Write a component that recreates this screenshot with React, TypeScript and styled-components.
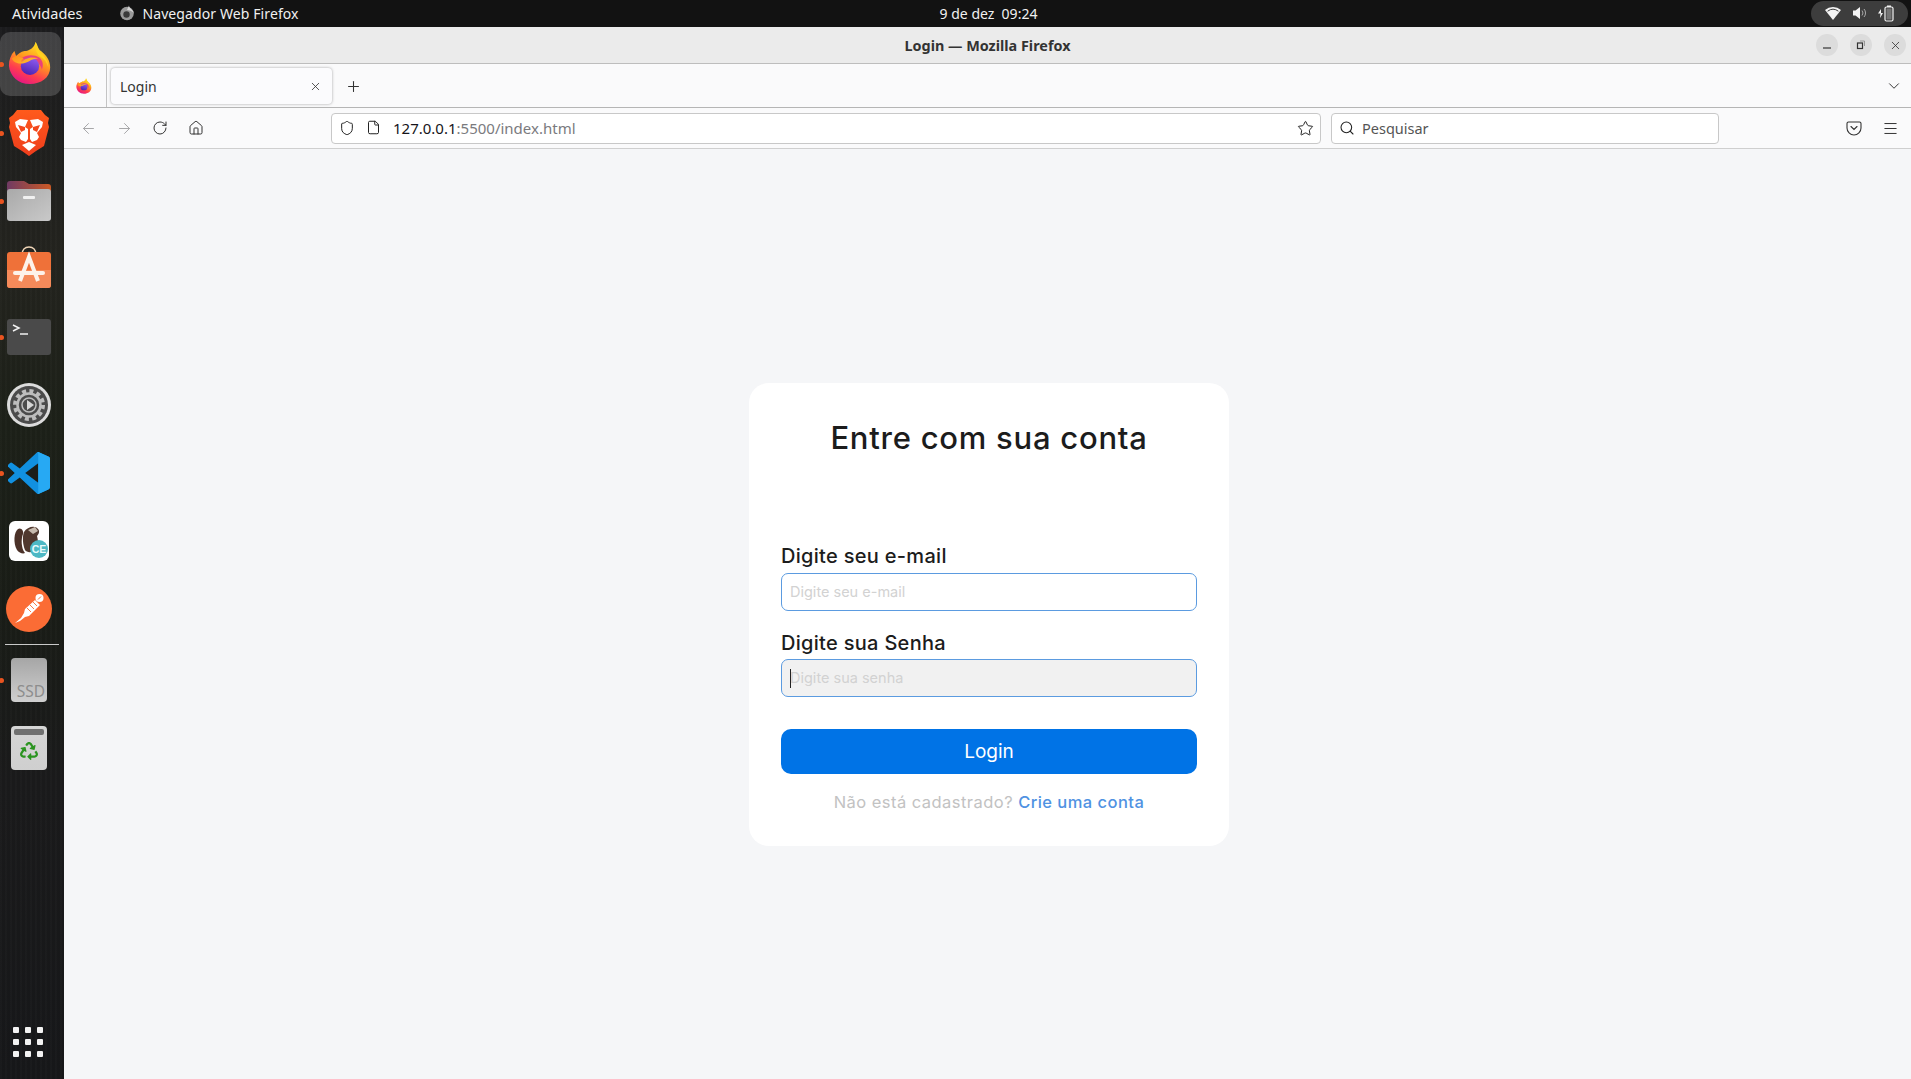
import React from "react"
import styled, { createGlobalStyle } from "styled-components"
import { ArrowLeft, ArrowRight, ChevronDown, File, House, Menu, Plus, RotateCw, Search, Shield, Star, X } from "lucide-react"
import { FaRecycle } from "react-icons/fa"

const Global = createGlobalStyle`
  html, body { margin: 0; padding: 0; height: 100%; overflow: hidden; }
  body { font-family: "Noto Sans", sans-serif; background: #f5f6f8; }
  #root { height: 100%; }
  * { box-sizing: border-box; }
`

const Screen = styled.div`
  width: 1911px;
  height: 1079px;
  display: flex;
  flex-direction: column;
`

const TopBar = styled.header`
  height: 27px;
  flex: none;
  background: #121212;
  color: #f0f0f0;
  font-size: 14px;
  display: grid;
  grid-template-columns: 1fr auto 1fr;
  align-items: center;
  padding: 0 3px 1px 64px;
`

const TopLeft = styled.div`
  display: flex;
  align-items: center;
  gap: 37px;
  margin-left: -52px;
  font-size: 14.5px;
`

const AppMenu = styled.div`
  display: flex;
  align-items: center;
  gap: 7px;
  font-size: 14px;
  letter-spacing: 0.1px;
`

const Clock = styled.div`
  margin-left: 5px;
  font-size: 14px;
  white-space: pre;
`

const Tray = styled.div`
  justify-self: end;
  width: 97px;
  height: 25px;
  border-radius: 13px;
  background: #3d3d3d;
  display: flex;
  align-items: center;
  justify-content: space-evenly;
  padding: 0 4px;
`

const Desk = styled.div`
  flex: 1;
  display: flex;
  min-height: 0;
`

const Dock = styled.nav`
  width: 64px;
  flex: none;
  display: flex;
  flex-direction: column;
  padding-top: 3px;
  background:
    repeating-linear-gradient(90deg, rgba(255, 255, 255, 0.01) 0 2px, rgba(0, 0, 0, 0.04) 2px 5px),
    linear-gradient(180deg, #1c1c1e 0%, #24241f 22%, #1d2119 38%, #1a1d17 55%, #1b1b1c 72%, #17181a 100%);
`

const DockItem = styled.div<{ $active?: boolean; $lift?: number }>`
  position: relative;
  height: ${p => (p.$active ? "64px" : "68px")};
  margin: ${p => (p.$active ? "2px 3px 3px 0" : "0")};
  padding-right: ${p => (p.$active ? "2px" : "7px")};
  padding-bottom: ${p => p.$lift ?? 0}px;
  display: flex;
  align-items: center;
  justify-content: center;
  background: ${p => (p.$active ? "rgba(255, 255, 255, 0.17)" : "transparent")};
  border-radius: ${p => (p.$active ? "10px" : "0")};
`

const RunDot = styled.span`
  position: absolute;
  left: -1px;
  top: 50%;
  width: 5px;
  height: 5px;
  margin-top: -2px;
  border-radius: 50%;
  background: #e95420;
`

const DockRule = styled.div`
  height: 1px;
  margin: 1px 5px 1px;
  background: #c9c9c9;
`

const AppsGrid = styled.div`
  margin: auto 0 22px 13px;
  display: grid;
  grid-template-columns: repeat(3, 6px);
  gap: 6px;
`

const AppsDot = styled.span`
  width: 6px;
  height: 6px;
  border-radius: 1px;
  background: #f2f2f2;
`

const TrashCan = styled.div`
  width: 36px;
  height: 44px;
  border-radius: 4px;
  background: linear-gradient(180deg, #d5d5d5, #cfcfcf);
  display: flex;
  flex-direction: column;
  align-items: center;
  padding-top: 3px;
  color: #2b9420;
  font-size: 18px;
`

const TrashLid = styled.div`
  width: 30px;
  height: 6px;
  border-radius: 2px;
  background: #707070;
  margin-bottom: 7px;
`

const Browser = styled.main`
  flex: 1;
  min-width: 0;
  display: flex;
  flex-direction: column;
`

const TitleBar = styled.div`
  height: 37px;
  flex: none;
  background: #ebebeb;
  border-bottom: 1px solid #bdbdbd;
  position: relative;
  display: flex;
  align-items: center;
  justify-content: center;
  font-size: 14.4px;
  font-weight: 700;
  color: #333;
  padding-top: 1px;
`

const WindowButtons = styled.div`
  position: absolute;
  right: 5px;
  top: 7px;
  display: flex;
  gap: 12px;
`

const WindowButton = styled.span`
  width: 22px;
  height: 22px;
  border-radius: 50%;
  background: #dcdcdc;
  color: #333;
  display: flex;
  align-items: center;
  justify-content: center;
`

const TabBar = styled.div`
  height: 44px;
  flex: none;
  background: #fafafb;
  border-bottom: 1px solid #b5b5b5;
  display: flex;
  align-items: center;
  padding-right: 8px;
  color: #333;
`

const PinnedTab = styled.div`
  width: 43px;
  align-self: stretch;
  border-right: 1px solid #c4c4c4;
  display: flex;
  align-items: center;
  justify-content: center;
  padding-right: 3px;
`

const Tab = styled.div`
  width: 221px;
  height: 36px;
  margin: 1px 0 0 4px;
  border-radius: 4px;
  background: #fbfbfd;
  box-shadow: 0 0 3px rgba(0, 0, 0, 0.35);
  display: flex;
  align-items: center;
  justify-content: space-between;
  padding: 0 10px 0 9px;
  font-size: 14px;
  color: #333;
`

const NewTab = styled.span`
  margin: 1px 0 0 13px;
  display: flex;
`

const TabEnd = styled.span`
  margin: 1px 0 0 auto;
  display: flex;
`

const NavBar = styled.div`
  height: 41px;
  flex: none;
  background: #fafafb;
  border-bottom: 1px solid #cfcfcf;
  display: flex;
  align-items: center;
  padding-left: 6px;
  color: #333;
`

const NavButton = styled.span<{ $off?: boolean }>`
  width: 36px;
  display: flex;
  justify-content: center;
  color: ${p => (p.$off ? "#a6a6a8" : "#333")};
`

const UrlBox = styled.div`
  width: 990px;
  height: 31px;
  margin-left: 117px;
  border: 1px solid #c8c8c8;
  border-radius: 4px;
  background: #fff;
  display: flex;
  align-items: center;
  padding: 0 6px 0 7px;
  font-size: 15px;
  color: #222;
`

const UrlIcons = styled.span`
  display: flex;
  gap: 11px;
  margin-right: 12px;
`

const UrlHost = styled.span`
  color: #15141a;
`

const UrlRest = styled.span`
  color: #7a7a7e;
`

const UrlEnd = styled.span`
  margin-left: auto;
  display: flex;
`

const SearchBox = styled(UrlBox)`
  width: 388px;
  margin-left: 10px;
  color: #555;
  gap: 7px;
  font-size: 14.5px;
`

const ToolIcons = styled.div`
  margin-left: auto;
  margin-right: 12px;
  display: flex;
  gap: 20px;
  align-items: center;
`

const Page = styled.section`
  flex: 1;
  min-height: 0;
  background: #f5f6f8;
  display: flex;
  align-items: center;
  justify-content: center;
  padding-left: 3px;
`

const Card = styled.form`
  width: 480px;
  height: 463px;
  background: #fff;
  border-radius: 20px;
  padding: 32px;
  font-family: Inter, "Noto Sans", sans-serif;
`

const Title = styled.h1`
  margin: 5px 0 88px;
  font-size: 31px;
  line-height: 36px;
  letter-spacing: 0.75px;
  font-weight: 500;
  text-align: center;
  color: #1c1c1c;
`

const Label = styled.label<{ $gap: number }>`
  display: block;
  font-size: 20px;
  line-height: 24px;
  letter-spacing: 0.3px;
  font-weight: 500;
  color: #1c1c1c;
  margin-bottom: ${p => p.$gap}px;
`

const Field = styled.div`
  margin-bottom: 20px;
`

const InputWrap = styled.div`
  position: relative;
`

const Input = styled.input<{ $focused?: boolean }>`
  display: block;
  width: 100%;
  height: 38px;
  padding: 0 8px;
  border: 1px solid #5b9be0;
  border-radius: 7px;
  background: ${p => (p.$focused ? "#f1f1f1" : "#fff")};
  font: 14.5px Inter, "Noto Sans", sans-serif;
  outline: none;
  caret-color: transparent;
  &::placeholder { color: #d2d2d2; opacity: 1; }
`

const Caret = styled.span`
  position: absolute;
  left: 9px;
  top: 10px;
  width: 1px;
  height: 19px;
  background: #222;
`

const LoginButton = styled.button`
  display: block;
  width: 100%;
  height: 45px;
  margin-top: 32px;
  border: 0;
  border-radius: 10px;
  background: #0073e6;
  color: #fff;
  font: 400 19px Inter, "Noto Sans", sans-serif;
`

const Footer = styled.p`
  margin: 18px 0 0;
  text-align: center;
  font-size: 16.5px;
  line-height: 20px;
  letter-spacing: 0.46px;
  color: #c2c2c2;
`

const FooterLink = styled.a`
  color: #4f92e2;
  font-weight: 500;
`

const FirefoxIcon = ({ size, id }: { size: number; id: string }) => (
  <svg width={size} height={size} viewBox="0 0 48 48">
    <defs>
      <linearGradient id={`${id}a`} x1="0.75" y1="0.05" x2="0.3" y2="1">
        <stop offset="0" stopColor="#ffe226" />
        <stop offset="0.4" stopColor="#ff9a1f" />
        <stop offset="0.72" stopColor="#ff3d4e" />
        <stop offset="1" stopColor="#e31587" />
      </linearGradient>
      <linearGradient id={`${id}b`} x1="0.7" y1="0" x2="0.3" y2="1">
        <stop offset="0" stopColor="#8f5cf0" />
        <stop offset="1" stopColor="#4a22b0" />
      </linearGradient>
      <linearGradient id={`${id}c`} x1="0" y1="0" x2="1" y2="0.6">
        <stop offset="0" stopColor="#ff8a16" />
        <stop offset="1" stopColor="#ffbd2e" />
      </linearGradient>
    </defs>
    <path d="M30 1c3 4 2 7 6 10 6 5 10 10 10 18 0 11-10 18-22 18C11 47 2 38 1 27c0-6 2-12 6-16l2 6c2-3 5-5 9-6-1 0 10 0 12-10z" fill={`url(#${id}a)`} />
    <path d="M14 20c4-5 14-6 20-2 4 3 5 8 3 13-1-3-4-9-10-11-5-1-9-1-13 0z" fill="#e8318a" opacity="0.85" />
    <ellipse cx="24" cy="27.500" rx="10" ry="9.500" fill={`url(#${id}b)`} />
    <path d="M4 19c3-2 7-4 7-4 0 2 3 3 6 4-2 1-3 2-2 4 2-3 9-7 18-4-4 0-7 1-10 3-5 3-10 3-13 2-3-1-5-3-6-5z" fill={`url(#${id}c)`} />
    <path d="M30 1c2 5 3 9 8 14 4 4 6 9 6 14-1-5-4-9-9-12-4-3-6-10-5-16z" fill="#ffd21f" />
  </svg>
)

const BraveIcon = () => (
  <svg width="42" height="48" viewBox="0 0 42 48">
    <defs>
      <linearGradient id="braveFace" x1="0" y1="0" x2="0" y2="1">
        <stop offset="0" stopColor="#ff5a1c" />
        <stop offset="1" stopColor="#ee3d1c" />
      </linearGradient>
    </defs>
    <path d="M9 1h24l4 5 4 3-1 5 1 4-5 19-8 5-7 5-7-5-8-5L1 18l1-4-1-5 4-3z" fill="url(#braveFace)" />
    <path d="M20 11l-8-1-5 3 1 5 5 6-2 4 2 3 5 2 2-3V20l-3-2z" fill="#fff" />
    <path d="M22 11l8-1 5 3-1 5-5 6 2 4-2 3-5 2-2-3V20l3-2z" fill="#fff" />
    <path d="M10 16l7 2 0 3-4 2zM32 16l-7 2 0 3 4 2z" fill="#f4481c" />
    <path d="M14 36l7-3 7 3-7 6z" fill="#fff" />
  </svg>
)

const FilesIcon = () => (
  <svg width="44" height="40" viewBox="0 0 44 40">
    <defs>
      <linearGradient id="filesBack" x1="0" y1="0" x2="1" y2="0">
        <stop offset="0" stopColor="#6f3a63" />
        <stop offset="1" stopColor="#cc5a25" />
      </linearGradient>
      <linearGradient id="filesFront" x1="0" y1="0" x2="1" y2="1">
        <stop offset="0" stopColor="#a9a9a9" />
        <stop offset="1" stopColor="#c9c9c9" />
      </linearGradient>
    </defs>
    <path d="M3 0h14l5 3h19a3 3 0 0 1 3 3v12H0V3a3 3 0 0 1 3-3z" fill="url(#filesBack)" />
    <rect y="8" width="44" height="32" rx="3" fill="url(#filesFront)" />
    <rect x="16" y="15" width="12" height="3" rx="1" fill="#f1f1f1" />
  </svg>
)

const StoreIcon = () => (
  <svg width="44" height="43" viewBox="0 0 44 43">
    <path d="M15 10c0-5 3-8 7-8s7 3 7 8" fill="none" stroke="#f0d6b8" strokeWidth="1.600" />
    <rect y="7" width="44" height="36" rx="3" fill="#ef7139" />
    <path d="M0 25h44v15a3 3 0 0 1-3 3H3a3 3 0 0 1-3-3z" fill="#f58a5a" />
    <path d="M13 36l9-24 9 24" fill="none" stroke="#fdf2ea" strokeWidth="4" />
    <path d="M8 28h28" stroke="#fdf2ea" strokeWidth="4" strokeLinecap="round" />
  </svg>
)

const TerminalIcon = () => (
  <svg width="44" height="36" viewBox="0 0 44 36">
    <rect width="44" height="36" rx="3" fill="#4a4a4a" />
    <path d="M6 6l6 3-6 3" fill="none" stroke="#f2f2f2" strokeWidth="1.500" />
    <path d="M13 15h8" stroke="#f2f2f2" strokeWidth="1.500" />
  </svg>
)

const SettingsIcon = () => (
  <svg width="46" height="46" viewBox="0 0 46 46">
    <circle cx="23" cy="23" r="22" fill="#dcdcdc" />
    <circle cx="23" cy="23" r="19" fill="#4b4b4b" />
    <circle cx="23" cy="23" r="14" fill="none" stroke="#bdbdbd" strokeWidth="4" strokeDasharray="4 3.330" />
    <circle cx="23" cy="23" r="11.500" fill="none" stroke="#bdbdbd" strokeWidth="2.500" />
    <circle cx="23" cy="23" r="7" fill="none" stroke="#bdbdbd" strokeWidth="1.500" />
    <path d="M21 18l7 5-7 5z" fill="#d6d6d6" />
  </svg>
)

const VsCodeIcon = () => (
  <svg width="42" height="42" viewBox="0 0 100 100">
    <path d="M96 11L75 1a6 6 0 0 0-7 1L28 39 10 26a4 4 0 0 0-5 0L1 30a4 4 0 0 0 0 6l15 14L1 64a4 4 0 0 0 0 6l4 4a4 4 0 0 0 5 0l18-13 40 37a6 6 0 0 0 7 1l21-10a6 6 0 0 0 4-6V17a6 6 0 0 0-4-6z" fill="#1190e0" />
    <path d="M72 73L41 50l31-23z" fill="#1b1d19" />
    <path d="M68 2a6 6 0 0 1 7-1l21 10a6 6 0 0 1 4 6v66a6 6 0 0 1-4 6L75 99a6 6 0 0 1-7-1c3 2 4 1 4-3V5c0-3-2-5-4-3z" fill="#27a9f3" />
  </svg>
)

const DbeaverText = styled.text`
  font: 700 10.5px "Liberation Sans", sans-serif;
  fill: #e8fbfd;
  text-anchor: middle;
`

const DbeaverIcon = () => (
  <svg width="40" height="40" viewBox="0 0 40 40">
    <rect width="40" height="40" rx="6" fill="#fff" />
    <path d="M9 8c-4 3-5 14-1 21 2 3 6 4 8 3-4-5-4-14-2-19 1-3-2-7-5-5z" fill="#4b3128" />
    <path d="M15 11c3-5 11-7 14-3 2 2 1 5-1 7 1 4 2 9-1 13-3 4-9 4-11 1-2-5-3-13-1-18z" fill="#50382e" />
    <path d="M19 9l7-3 3 4-5 3z" fill="#c6baad" />
    <circle cx="30" cy="28" r="9" fill="#4db8c4" />
    <DbeaverText x="30" y="32">CE</DbeaverText>
  </svg>
)

const PostmanIcon = () => (
  <svg width="46" height="46" viewBox="0 0 46 46">
    <circle cx="23" cy="23" r="23" fill="#fb6c35" />
    <path d="M9 37l6-5 3-5 1-4 10-9 5 5-11 11-4 1-5 4z" fill="#fff" />
    <path d="M21 22l4 4M24 19l4 4M27 16l4 4" stroke="#fb6c35" strokeWidth="0.900" />
    <circle cx="33.500" cy="12" r="4" fill="#fff" />
    <path d="M32 13.500l3-3" stroke="#fb6c35" strokeWidth="1" />
  </svg>
)

const SsdText = styled.text`
  font: 15.5px "Noto Sans", sans-serif;
  fill: #8d8d8d;
  text-anchor: middle;
`

const SsdIcon = () => (
  <svg width="36" height="44" viewBox="0 0 36 44">
    <defs>
      <linearGradient id="ssdFace" x1="0" y1="0" x2="0" y2="1">
        <stop offset="0" stopColor="#a6a6a6" />
        <stop offset="1" stopColor="#cfcfcf" />
      </linearGradient>
    </defs>
    <rect width="36" height="44" rx="4" fill="url(#ssdFace)" />
    <SsdText x="20" y="39">SSD</SsdText>
  </svg>
)

const FoxMono = () => (
  <svg width="16" height="16" viewBox="0 0 16 16">
    <circle cx="8" cy="8.500" r="6.800" fill="#9a9a9a" />
    <circle cx="7.500" cy="9.500" r="3.200" fill="#3a3a3a" />
    <path d="M10 0.500c0 3 4 4 5 7.500-2-2-5-3-7-3z" fill="#d6d6d6" />
  </svg>
)

const WifiIcon = () => (
  <svg width="16" height="14" viewBox="0 0 16 14">
    <path d="M0 4a12 12 0 0 1 16 0L8 14z" fill="#f4f4f4" />
    <path d="M2.600 5.200a9 9 0 0 1 10.800 0" stroke="#3d3d3d" strokeWidth="1" fill="none" />
  </svg>
)

const VolumeIcon = () => (
  <svg width="16" height="14" viewBox="0 0 16 14">
    <path d="M1 4.500h2.500L8 1v12L3.500 9.500H1z" fill="#f4f4f4" />
    <path d="M10 4.500a4 4 0 0 1 0 5M12 3a6 6 0 0 1 0 8" stroke="#aaa" strokeWidth="1" fill="none" />
  </svg>
)

const BatteryIcon = () => (
  <svg width="16" height="17" viewBox="0 0 16 17">
    <path d="M3 4L0 8.500h2.500L2 13l3-5H3z" fill="#f4f4f4" />
    <rect x="7" y="2" width="8" height="14" rx="1.500" fill="none" stroke="#f4f4f4" strokeWidth="1.200" />
    <rect x="9" y="0.500" width="4" height="1.500" fill="#f4f4f4" />
    <rect x="8.500" y="3.500" width="5" height="11" fill="#bbb" opacity="0.45" />
  </svg>
)

const PocketIcon = () => (
  <svg width="16" height="16" viewBox="0 0 16 16">
    <path d="M2.500 2h11A1.500 1.500 0 0 1 15 3.500V8a7 7 0 0 1-14 0V3.500A1.500 1.500 0 0 1 2.500 2z" fill="none" stroke="#333" strokeWidth="1.100" />
    <path d="M5 6.500l3 3 3-3" fill="none" stroke="#333" strokeWidth="1.100" strokeLinecap="round" />
  </svg>
)

const dockApps = [
  { key: "firefox", icon: <FirefoxIcon size={44} id="ffDock" />, running: true, active: true, lift: 3 },
  { key: "brave", icon: <BraveIcon />, running: true },
  { key: "files", icon: <FilesIcon />, running: true },
  { key: "store", icon: <StoreIcon />, lift: 6 },
  { key: "terminal", icon: <TerminalIcon />, running: true },
  { key: "settings", icon: <SettingsIcon /> },
  { key: "vscode", icon: <VsCodeIcon />, running: true },
  { key: "dbeaver", icon: <DbeaverIcon /> },
  { key: "postman", icon: <PostmanIcon /> },
]

export default function App() {
  return (
    <Screen>
      <Global />
      <TopBar>
        <TopLeft>
          <span>Atividades</span>
          <AppMenu>
            <FoxMono />
            Navegador Web Firefox
          </AppMenu>
        </TopLeft>
        <Clock>9 de dez  09:24</Clock>
        <Tray>
          <WifiIcon />
          <VolumeIcon />
          <BatteryIcon />
        </Tray>
      </TopBar>
      <Desk>
        <Dock>
          {dockApps.map(app => (
            <DockItem key={app.key} $active={app.active} $lift={app.lift}>
              {app.running && <RunDot />}
              {app.icon}
            </DockItem>
          ))}
          <DockRule />
          <DockItem>
            <RunDot />
            <SsdIcon />
          </DockItem>
          <DockItem>
            <TrashCan>
              <TrashLid />
              <FaRecycle />
            </TrashCan>
          </DockItem>
          <AppsGrid>
            {Array.from({ length: 9 }, (_, i) => (
              <AppsDot key={i} />
            ))}
          </AppsGrid>
        </Dock>
        <Browser>
          <TitleBar>
            Login — Mozilla Firefox
            <WindowButtons>
              <WindowButton>
                <svg width="10" height="10" viewBox="0 0 10 10">
                  <path d="M1 8h8" stroke="#333" strokeWidth="1.200" />
                </svg>
              </WindowButton>
              <WindowButton>
                <svg width="10" height="10" viewBox="0 0 10 10">
                  <rect x="1.500" y="3" width="5" height="5.500" fill="none" stroke="#333" strokeWidth="1.200" />
                  <path d="M4 1h4.500v5" fill="none" stroke="#888" strokeWidth="0.800" />
                </svg>
              </WindowButton>
              <WindowButton>
                <X size={13} strokeWidth={1.5} />
              </WindowButton>
            </WindowButtons>
          </TitleBar>
          <TabBar>
            <PinnedTab>
              <FirefoxIcon size={16} id="ffPin" />
            </PinnedTab>
            <Tab>
              Login
              <X size={13} strokeWidth={1.5} />
            </Tab>
            <NewTab>
              <Plus size={17} strokeWidth={1.5} />
            </NewTab>
            <TabEnd>
              <ChevronDown size={18} strokeWidth={1.3} />
            </TabEnd>
          </TabBar>
          <NavBar>
            <NavButton $off>
              <ArrowLeft size={17} strokeWidth={1.4} />
            </NavButton>
            <NavButton $off>
              <ArrowRight size={17} strokeWidth={1.4} />
            </NavButton>
            <NavButton>
              <RotateCw size={16} strokeWidth={1.5} />
            </NavButton>
            <NavButton>
              <House size={16} strokeWidth={1.5} />
            </NavButton>
            <UrlBox>
              <UrlIcons>
                <Shield size={16} strokeWidth={1.5} />
                <File size={15} strokeWidth={1.6} />
              </UrlIcons>
              <UrlHost>127.0.0.1</UrlHost>
              <UrlRest>:5500/index.html</UrlRest>
              <UrlEnd>
                <Star size={17} strokeWidth={1.4} />
              </UrlEnd>
            </UrlBox>
            <SearchBox>
              <Search size={16} strokeWidth={1.6} color="#222" />
              Pesquisar
            </SearchBox>
            <ToolIcons>
              <PocketIcon />
              <Menu size={17} strokeWidth={1.4} />
            </ToolIcons>
          </NavBar>
          <Page>
            <Card>
              <Title>Entre com sua conta</Title>
              <Field>
                <Label htmlFor="email" $gap={5}>Digite seu e-mail</Label>
                <InputWrap>
                  <Input id="email" placeholder="Digite seu e-mail" />
                </InputWrap>
              </Field>
              <Field>
                <Label htmlFor="senha" $gap={4}>Digite sua Senha</Label>
                <InputWrap>
                  <Input id="senha" placeholder="Digite sua senha" $focused />
                  <Caret />
                </InputWrap>
              </Field>
              <LoginButton type="button">Login</LoginButton>
              <Footer>
                Não está cadastrado? <FooterLink>Crie uma conta</FooterLink>
              </Footer>
            </Card>
          </Page>
        </Browser>
      </Desk>
    </Screen>
  )
}
